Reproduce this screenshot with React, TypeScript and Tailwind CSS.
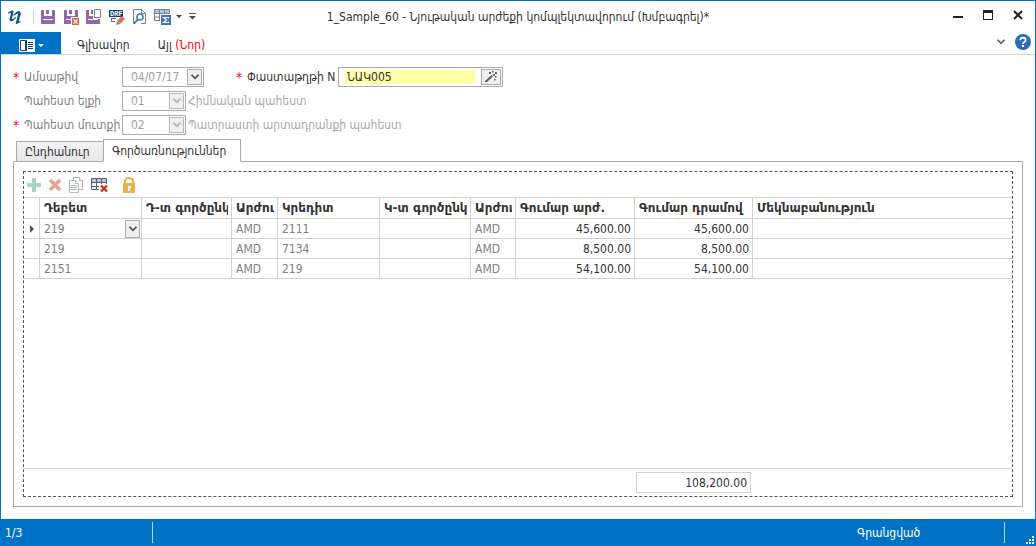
import React, { useState } from "react";
import clsx from "clsx";

interface Entry {
  debit: string;
  credit: string;
  amountCur: string;
  amountAmd: string;
}

const entries: Entry[] = [
  { debit: "219", credit: "2111", amountCur: "45,600.00", amountAmd: "45,600.00" },
  { debit: "219", credit: "7134", amountCur: "8,500.00", amountAmd: "8,500.00" },
  { debit: "2151", credit: "219", amountCur: "54,100.00", amountAmd: "54,100.00" },
];

const headers = [
  "Դեբետ",
  "Դ-տ գործընկեր",
  "Արժույթ",
  "Կրեդիտ",
  "Կ-տ գործընկեր",
  "Արժույթ",
  "Գումար արժ.",
  "Գումար դրամով",
  "Մեկնաբանություն",
];

const Chevron = () => (
  <svg width="8" height="6" viewBox="0 0 8 6" fill="none" stroke="currentColor" strokeWidth="1.800">
    <path d="M0.5 0.8 4 4.3 7.5 0.8" />
  </svg>
);

const SaveIcon = () => (
  <svg width="16" height="16" viewBox="0 0 16 16">
    <path fill="#9068b0" d="M1 1h3v6h8V1h3v14H1zM6 1h3v4H6z" />
    <path fill="#fff" d="M3 10h10v1H3z" />
  </svg>
);

const SaveCloseIcon = () => (
  <svg width="16" height="16" viewBox="0 0 16 16">
    <path fill="#9068b0" d="M1 1h3v6h8V1h3v14H1zM6 1h3v4H6z" />
    <path fill="#fff" d="M3 10h10v1H3zM8 8h8v8H8z" />
    <path fill="#d9603f" d="M9 9h7v7H9z" />
    <path stroke="#fff" strokeWidth="1.200" d="m10.500 10.500 4 4m0-4-4 4" />
  </svg>
);

const SaveNewIcon = () => (
  <svg width="16" height="16" viewBox="0 0 16 16">
    <path fill="#9068b0" d="M0 1h3v6h4v3h7v5H0zM5 1h2v4H5z" />
    <path fill="#fff" d="M2 10h10v1H2z" />
    <path fill="#fff" stroke="#808080" d="M8.500 0.500h6v8h-6z" />
  </svg>
);

const DraftIcon = () => (
  <svg width="17" height="16" viewBox="0 0 17 16">
    <path fill="#17406f" d="M0 1h14v7H0z" />
    <text x="1" y="7" fontSize="7" fontWeight="700" fontFamily="Liberation Mono, monospace" fill="#fff">
      DRF
    </text>
    <path fill="none" stroke="#606060" d="M2 9.500h5M2.500 9v3.500H6" />
    <path fill="#e2714b" d="m13 7 3 3-5 5-3-3z" />
    <path fill="#808080" d="m8 12 3 3-4 1z" />
  </svg>
);

const PreviewIcon = () => (
  <svg width="14" height="16" viewBox="0 0 14 16" fill="none">
    <path stroke="#808080" d="M2 14.500H0.500V0.500h8l4 4v10H8" />
    <path stroke="#808080" d="M8.500 0.500v4h4" />
    <circle cx="7" cy="8" r="3" stroke="#3f77b5" strokeWidth="1.600" fill="#fff" />
    <path stroke="#3f77b5" strokeWidth="2" d="m5 10.500-4 4" />
  </svg>
);

const TotalsIcon = () => (
  <svg width="17" height="16" viewBox="0 0 17 16">
    <path fill="#a8c4e6" d="M0 0h16v4H0z" />
    <path fill="none" stroke="#808080" d="M0.500 0.500h15v11H0.500zM0 4.500h16M0 8h16M5.500 0v12M10.500 0v12" />
    <path fill="#fff" d="M6 5h11v11H6z" />
    <path fill="#3f77b5" d="M7 6h10v10H7z" />
    <path fill="none" stroke="#fff" strokeWidth="1.200" d="M14.500 9.500V8.500h-5l3 2.500-3 2.500h5v-1" />
  </svg>
);

const LogoIcon = () => (
  <svg width="14" height="16" viewBox="0 0 14 16" fill="#164f8c">
    <path d="M0.500 3 4.500 1.500Q5.800 1.300 5.500 3L4 9.500Q4 10.500 5.500 9.500L8 7.500 7.500 9.500 4.500 12Q1.500 13 1.500 10.500L3 4 0 4.500z" />
    <path d="M5.500 5.500 9 2.500Q12.500 1 12.800 4.500L10.800 12.500 13 12 12 13.500 8.500 15Q7.500 15 8 13.500L10 5.500Q10 4 8.500 5L5.500 7z" />
  </svg>
);

const WandIcon = () => (
  <svg width="12" height="12" viewBox="0 0 12 12" fill="#606060">
    <path d="M0 10 6.500 4 8 5.500 2 11H0z" />
    <path d="M4 1h2v2H4zM7 0h1.500v1.500H7zM10 1h2v2h-2zM8 3h2v2H8zM10 5h1.500v1.500H10zM9 8h1.500v1.500H9z" />
  </svg>
);

const iconBtn = "flex h-4 items-center justify-center";

const TitleBar = () => (
  <header className="grid h-[31px] shrink-0 grid-cols-[1fr_auto_1fr] items-center">
    <div className="flex items-center pl-[7px]">
      <LogoIcon />
      <span className="ml-[11px] mr-[6px] h-[14px] w-px bg-[#d0d0d0]" />
      <div className="flex items-center gap-[7px]">
        <button aria-label="Save" className={iconBtn}><SaveIcon /></button>
        <button aria-label="Save and close" className={iconBtn}><SaveCloseIcon /></button>
        <button aria-label="Save and new" className={iconBtn}><SaveNewIcon /></button>
        <button aria-label="Draft" className={iconBtn}><DraftIcon /></button>
        <button aria-label="Preview" className={iconBtn}><PreviewIcon /></button>
        <button aria-label="Totals" className={clsx(iconBtn, "gap-[5px]")}>
          <TotalsIcon />
          <svg width="6" height="3" viewBox="0 0 6 3"><path d="M0 0h6L3 3z" fill="#444" /></svg>
        </button>
        <button aria-label="Customize" className={iconBtn}>
          <svg width="7" height="7" viewBox="0 0 7 7" fill="#505050"><path d="M0 0h7v1H0zM0 3h7L3.500 6.500z" /></svg>
        </button>
      </div>
    </div>
    <h1>1_Sample_60 - Նյութական արժեքի կոմպլեկտավորում (Խմբագրել)*</h1>
    <div className="flex items-center justify-end gap-5 pr-3 pb-1 text-[#222]">
      <button aria-label="Minimize">
        <svg width="10" height="10" viewBox="0 0 10 10"><path d="M0 6h10v2H0z" fill="currentColor" /></svg>
      </button>
      <button aria-label="Maximize">
        <svg width="10" height="10" viewBox="0 0 10 10"><path d="M0 0h10v10H0zM1 3v6h8V3z" fillRule="evenodd" fill="currentColor" /></svg>
      </button>
      <button aria-label="Close">
        <svg width="10" height="10" viewBox="0 0 10 10"><path d="m1 1 8 8m0-8-8 8" stroke="currentColor" strokeWidth="2" /></svg>
      </button>
    </div>
  </header>
);

const Ribbon = () => (
  <nav className="flex h-[23px] shrink-0 items-start border-b border-[#d2d2d2]">
    <button aria-label="Menu" className="flex h-[22px] w-[60px] items-center justify-center gap-[3px] bg-[#0072c6] pt-1">
      <svg width="16" height="13" viewBox="0 0 16 13">
        <path fill="#fff" d="M0 0h16v13H0z" />
        <path fill="none" stroke="#17406f" d="M1.500 1.500h5v10h-5zM7.500 1v11M9 3.500h5M9 5.500h5M9 7.500h5M9 9.500h5" />
      </svg>
      <svg width="6" height="3" viewBox="0 0 6 3"><path d="M0 0h6L3 3z" fill="#fff" /></svg>
    </button>
    <button className="ml-4 mt-[5px]">Գլխավոր</button>
    <button className="ml-7 mt-[5px]">
      Այլ <span className="text-[#ff0000]">(Նոր)</span>
    </button>
    <div className="ml-auto flex items-center gap-[10px] pr-1 pt-[2px] text-[#606060]">
      <button aria-label="Collapse"><Chevron /></button>
      <button aria-label="Help">
        <svg width="16" height="16" viewBox="0 0 16 16">
          <circle cx="8" cy="8" r="8" fill="#2d6db5" />
          <path d="M5.300 6.200Q5.400 3.700 8 3.700T10.700 6Q10.700 7.200 9.400 8 8 8.700 8 10" fill="none" stroke="#fff" strokeWidth="1.900" />
          <path d="M7 11h2v2H7z" fill="#fff" />
        </svg>
      </button>
    </div>
  </nav>
);

interface ComboProps {
  id: string;
  value: string;
  width: string;
  active?: boolean;
}

const Combo = ({ id, value, width, active }: ComboProps) => (
  <div className={clsx("relative h-5 border border-[#ababab]", width)}>
    <select
      id={id}
      defaultValue={value}
      className="block h-full w-full appearance-none bg-white pl-2 text-[#a0a0a0] outline-none"
    >
      <option>{value}</option>
    </select>
    <span
      className={clsx(
        "pointer-events-none absolute inset-y-px right-px flex w-[15px] items-center justify-center border bg-[#f0f0f0]",
        active ? "border-[#ababab] text-[#505050]" : "border-[#b8b8b8] text-[#b4b4b4]"
      )}
    >
      <Chevron />
    </span>
  </div>
);

const Star = () => <span className="text-[14px] text-[#ff0000]">*</span>;

const FieldLabel = ({ id, required, children }: { id: string; required?: boolean; children: React.ReactNode }) => (
  <label htmlFor={id} className="flex w-[109px] shrink-0 whitespace-nowrap text-[#808080]">
    <span className="w-[11px]">{required && <Star />}</span>
    {children}
  </label>
);

const DocumentForm = () => (
  <form className="flex flex-col gap-1 pt-3">
    <div className="flex h-5 items-center">
      <FieldLabel id="date" required>Ամսաթիվ</FieldLabel>
      <Combo id="date" value="04/07/17" width="w-[82px]" active />
      <label htmlFor="docnum" className="ml-8 flex w-[102px] whitespace-nowrap">
        <span className="w-[11px]"><Star /></span>
        Փաստաթղթի N
      </label>
      <div className="flex h-5 w-[165px] items-center border border-[#ababab] pl-[6px] pr-px">
        <input id="docnum" defaultValue="ՆԱԿ005" className="h-[14px] w-[130px] bg-[#ffffa8] pl-[2px] outline-none" />
        <button type="button" aria-label="Generate" className="ml-auto flex h-4 w-5 items-center justify-center border border-[#ababab] bg-[#f0f0f0]">
          <WandIcon />
        </button>
      </div>
    </div>
    <div className="flex h-5 items-center">
      <FieldLabel id="from">Պահեստ ելքի</FieldLabel>
      <Combo id="from" value="01" width="w-[64px]" />
      <span className="ml-[2px] text-[#a8a8a8]">Հիմնական պահեստ</span>
    </div>
    <div className="flex h-5 items-center">
      <FieldLabel id="to" required>Պահեստ մուտքի</FieldLabel>
      <Combo id="to" value="02" width="w-[64px]" />
      <span className="ml-[2px] text-[#a8a8a8]">Պատրաստի արտադրանքի պահեստ</span>
    </div>
  </form>
);

const Toolbar = () => (
  <div className="flex h-[25px] shrink-0 items-center gap-[7px] pl-[3px]">
    <button aria-label="Add" className={iconBtn}>
      <svg width="14" height="14" viewBox="0 0 14 14"><path d="M5 0h4v5h5v4H9v5H5V9H0V5h5z" fill="#a8d5bf" /></svg>
    </button>
    <button aria-label="Delete" className={iconBtn}>
      <svg width="14" height="14" viewBox="0 0 14 14"><path d="m2 2 10 10M12 2 2 12" stroke="#e8a396" strokeWidth="3.600" /></svg>
    </button>
    <button aria-label="Copy" className={iconBtn}>
      <svg width="15" height="16" viewBox="0 0 15 16" fill="#fff" stroke="#b8b8b8">
        <path d="M4.500 0.500h6l3 3v9h-9z" />
        <path d="M0.500 3.500h6l3 3v9h-9z" />
        <path d="M6.500 3.500v3h3M10.500 0.500v3h3" />
        <path d="M2 8.500h6M2 10.500h6M2 12.500h6" stroke="#94b8da" />
      </svg>
    </button>
    <button aria-label="Clear table" className={iconBtn}>
      <svg width="17" height="16" viewBox="0 0 17 16">
        <path fill="#a8c4e6" d="M0 1h16v4H0z" />
        <path fill="none" stroke="#606060" d="M0.500 1.500h15v11H0.500zM0 5.500h16M0 9.500h16M5.500 1v12M10.500 1v12" />
        <path fill="#fff" d="M8 7h9v9H8z" />
        <path stroke="#c8321e" strokeWidth="2.400" d="m10 8.500 6 6m0-6-6 6" />
      </svg>
    </button>
    <button aria-label="Lock" className={clsx(iconBtn, "ml-2")}>
      <svg width="12" height="16" viewBox="0 0 12 16">
        <path d="M2 7V4.500Q2 1 6 1T10 4.500V7" fill="none" stroke="#eab14d" strokeWidth="2" />
        <path d="M0 6h12v10H0z" fill="#eab14d" />
        <path d="M5 9h3v2H7v3H5z" fill="#fff" />
      </svg>
    </button>
  </div>
);

const cell = "overflow-hidden whitespace-nowrap border-r border-b border-[#d2d2d2] p-0 pl-1 pr-[3px]";

const EntriesTable = () => (
  <table className="w-full table-fixed border-separate border-spacing-0 border-t border-[#d2d2d2]">
    <colgroup>
      <col className="w-4" />
      <col className="w-[102px]" />
      <col className="w-[90px]" />
      <col className="w-[46px]" />
      <col className="w-[102px]" />
      <col className="w-[91px]" />
      <col className="w-[45px]" />
      <col className="w-[119px]" />
      <col className="w-[118px]" />
      <col />
    </colgroup>
    <thead className="font-['DejaVu_Sans',sans-serif]">
      <tr className="h-[21px] text-left">
        <th className={cell} />
        {headers.map((h, idx) => (
          <th key={idx} className={clsx(cell, "last:border-r-0")}>
            <div className="overflow-hidden">{h}</div>
          </th>
        ))}
      </tr>
    </thead>
    <tbody className="text-[#808080]">
      {entries.map((e, idx) => (
        <tr key={idx} className="h-5">
          <td className={cell}>
            {idx === 0 && (
              <svg width="4" height="8" viewBox="0 0 4 8" className="ml-[2px]"><path d="M0 0v8l4-4z" fill="#505050" /></svg>
            )}
          </td>
          <td className={cell}>
            {idx === 0 ? (
              <div className="relative -mr-[2px]">
                <select aria-label="Դեբետ" className="block h-[18px] w-full appearance-none outline-none">
                  <option>{e.debit}</option>
                </select>
                <span className="pointer-events-none absolute inset-y-0 right-0 flex w-[15px] items-center justify-center border border-[#ababab] bg-[#f0f0f0] text-[#505050]">
                  <Chevron />
                </span>
              </div>
            ) : (
              e.debit
            )}
          </td>
          <td className={cell} />
          <td className={cell}>AMD</td>
          <td className={cell}>{e.credit}</td>
          <td className={cell} />
          <td className={cell}>AMD</td>
          <td className={clsx(cell, "text-right text-[#333]")}>{e.amountCur}</td>
          <td className={clsx(cell, "text-right text-[#333]")}>{e.amountAmd}</td>
          <td className={clsx(cell, "last:border-r-0")} />
        </tr>
      ))}
    </tbody>
  </table>
);

const StatusBar = () => (
  <footer className="flex h-[27px] shrink-0 bg-[#0072c6] text-white">
    <span className="my-[3px] flex w-[152px] items-center border-r border-[#b8d6ee] pl-1">1/3</span>
    <span className="my-[3px] ml-auto flex w-[148px] items-center border-r border-[#b8d6ee]">Գրանցված</span>
    <svg width="8" height="8" viewBox="0 0 8 8" className="ml-[21px] mr-px mt-auto mb-[2px]" fill="#fff">
      <path d="M6 0h2v2H6zM3 3h2v2H3zM6 3h2v2H6zM0 6h2v2H0zM3 6h2v2H3zM6 6h2v2H6z" />
    </svg>
  </footer>
);

const tabs = [
  { label: "Ընդհանուր", width: "w-[87px]" },
  { label: "Գործառնություններ", width: "w-[138px]" },
];

const App = () => {
  const [activeTab, setActiveTab] = useState(1);

  return (
    <div className="flex min-h-screen flex-col border-x border-t border-[#0072c6] bg-white font-['DejaVu_Sans_Condensed','DejaVu_Sans',sans-serif] text-[12px] leading-4 text-[#333]">
      <TitleBar />
      <Ribbon />
      <main className="flex flex-1 flex-col px-3 pb-3">
        <DocumentForm />
        <div role="tablist" className="-mb-px mt-1 flex items-end pl-[3px]">
          {tabs.map((tab, idx) => (
            <button
              key={tab.label}
              role="tab"
              aria-selected={idx === activeTab}
              onClick={() => setActiveTab(idx)}
              className={clsx(
                "relative whitespace-nowrap border border-[#ababab] pl-2 text-left",
                tab.width,
                idx === activeTab
                  ? "h-[23px] border-b-white bg-white"
                  : "h-[21px] border-r-0 bg-gradient-to-b from-[#f4f4f4] to-[#e6e6e6]"
              )}
            >
              {tab.label}
            </button>
          ))}
        </div>
        <section className="flex flex-1 flex-col border border-[#ababab] p-[9px]">
          <div className="flex flex-1 flex-col border border-dashed border-[#555]">
            <Toolbar />
            <EntriesTable />
            <div className="mt-auto border-t border-[#d2d2d2] pb-[3px] pl-[612px] pt-[3px]">
              <output className="block h-[21px] w-[115px] border border-[#d2d2d2] pr-[3px] pt-[2px] text-right">108,200.00</output>
            </div>
          </div>
        </section>
      </main>
      <StatusBar />
    </div>
  );
};

export default App;
